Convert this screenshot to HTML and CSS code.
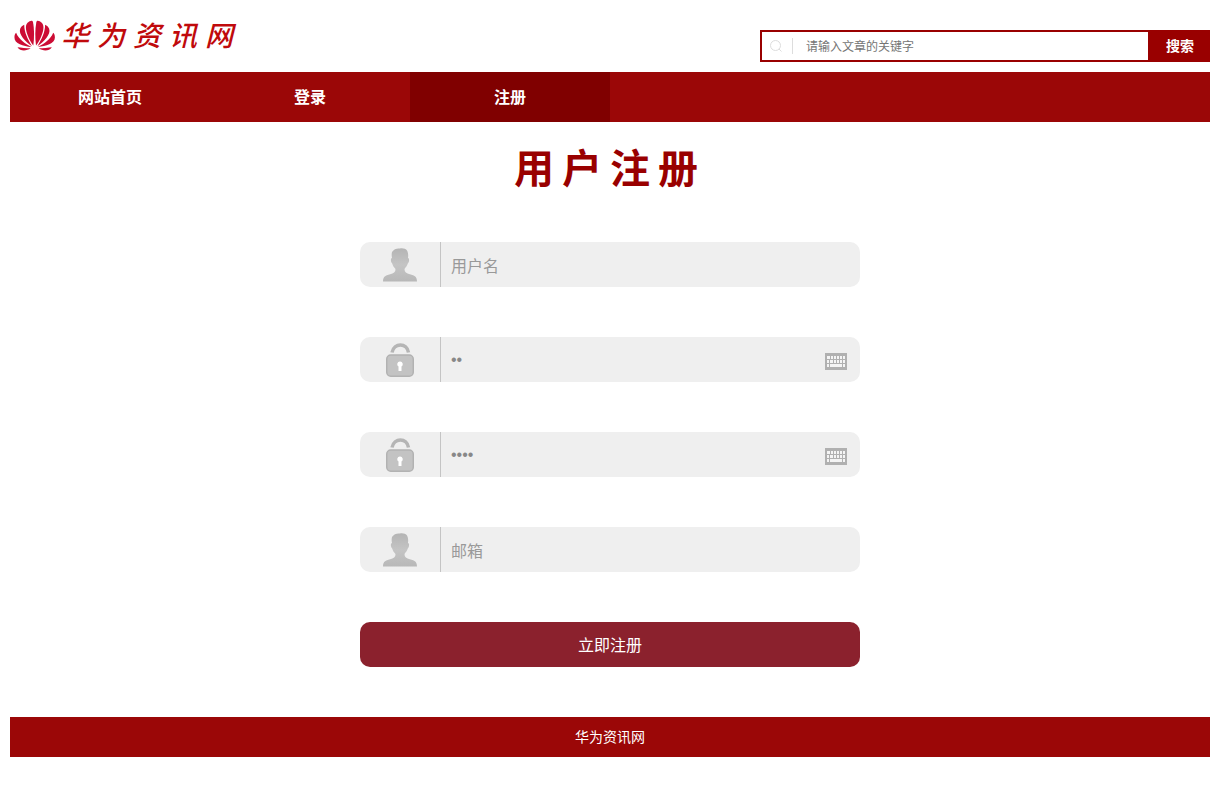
FILE: index.html
```
<!DOCTYPE html>
<html lang="zh-CN">
<head>
<meta charset="utf-8">
<title>用户注册 - 华为资讯网</title>
<link rel="stylesheet" href="styles.css">
</head>
<body>
<svg class="defs" aria-hidden="true">
  <defs>
    <linearGradient id="shade" x1="0" y1="0" x2="0" y2="1">
      <stop offset="0" stop-color="#b4b4b4"/>
      <stop offset="0.5" stop-color="#c4c4c4"/>
      <stop offset="1" stop-color="#b8b8b8"/>
    </linearGradient>
    <symbol id="user" viewBox="0 0 34 34">
      <path fill="url(#shade)" d="M9 4C11 1 14 0 17 .5C19 0 23 .5 24 2.500C25 4 25.500 7 25 10C26.500 10 26.500 14 24.800 15.500C24 18 22.500 19.500 21.500 21C21.500 24 23 25 26 26C31 27.500 34 28 34 33.500H0C0 28 3 27.500 8 26C11 25 12.500 24 12.500 21C11 19.500 10 18 9.200 15.500C7.500 14 7.500 10 9 10C8.600 8 8.500 6 9 4Z"/>
    </symbol>
    <symbol id="lock" viewBox="0 0 28 35">
      <path fill="none" stroke="#b5b5b5" stroke-width="3.500" d="M6 10.500C8 .5 21 .5 22.500 10.500"/>
      <rect x=".75" y="13" width="26.500" height="21.200" rx="4" fill="#c3c3c3" stroke="#b2b2b2" stroke-width="1.500"/>
      <path fill="#fff" d="M14 19.500a2.700 2.700 0 0 1 1.500 5V29h-3v-4.500A2.700 2.700 0 0 1 14 19.500Z"/>
    </symbol>
    <symbol id="keyboard" viewBox="0 0 22 17">
      <path fill="#b0b0b0" d="M0 0h22v17H0z"/>
      <path fill="#f4f4f4" d="M2 3h3v3H2zM6 3h2v3H6zM9 3h2v3H9zM12 3h2v3h-2zM15 3h2v3h-2zM18 3h2v3h-2zM2 7h2v3H2zM5 7h3v3H5zM9 7h2v3H9zM12 7h2v3h-2zM15 7h2v3h-2zM18 7h2v3h-2zM2 11h2v3H2zM5 11h12v3H5zM18 11h2v3h-2z"/>
    </symbol>
  </defs>
</svg>
<div class="page">
  <header class="header">
    <a class="logo" href="#">
      <svg class="logo-mark" viewBox="42 28 121 92" aria-hidden="true">
        <g id="petals" fill="#cc0c34">
          <path d="M99 104C84 84 69 48 82 36C88 31 96 27 98 34C102 55 102 80 99 104Z"/>
          <path d="M95 106C76 94 54 70 60 54C62 48 67 44 72 42C72 64 82 84 95 106Z"/>
          <path d="M93 108C70 106 42 98 43 79C43 73 45 69 48 66C56 86 74 98 93 108Z"/>
          <path d="M91 112C78 121 60 121 52 109C62 110 78 112 91 112Z"/>
        </g>
        <use href="#petals" transform="translate(206 0) scale(-1 1)"/>
      </svg>
      <span class="logo-text">华为资讯网</span>
    </a>
    <form class="search" role="search">
      <label class="search-label" for="keyword">
        <svg class="search-icon" viewBox="0 0 14 14" role="img" aria-label="搜索文章"><path fill="none" stroke="#ddd" d="M11.500 6.500A5 5 0 1 1 1.500 6.500A5 5 0 1 1 11.500 6.500M10 10L12.500 12.500"/></svg>
      </label>
      <input class="search-input" id="keyword" type="text" placeholder="请输入文章的关键字">
      <button class="search-button" type="submit">搜索</button>
    </form>
  </header>
  <nav class="nav">
    <a class="nav-link" href="#">网站首页</a>
    <a class="nav-link" href="#">登录</a>
    <a class="nav-link active" href="#" aria-current="page">注册</a>
  </nav>
  <main>
    <h1 class="title">用户注册</h1>
    <form class="register">
      <div class="field">
        <label class="field-label" for="username"><svg class="user-icon" role="img" aria-label="用户名"><use href="#user"/></svg></label>
        <input class="field-input" id="username" type="text" placeholder="用户名">
      </div>
      <div class="field">
        <label class="field-label" for="password"><svg class="lock-icon" role="img" aria-label="密码"><use href="#lock"/></svg></label>
        <input class="field-input password" id="password" type="password" value="12">
        <button class="key-button" type="button" aria-label="软键盘"><svg class="key-icon"><use href="#keyboard"/></svg></button>
      </div>
      <div class="field">
        <label class="field-label" for="confirm"><svg class="lock-icon" role="img" aria-label="确认密码"><use href="#lock"/></svg></label>
        <input class="field-input password" id="confirm" type="password" value="1234">
        <button class="key-button" type="button" aria-label="软键盘"><svg class="key-icon"><use href="#keyboard"/></svg></button>
      </div>
      <div class="field">
        <label class="field-label" for="email"><svg class="user-icon" role="img" aria-label="邮箱"><use href="#user"/></svg></label>
        <input class="field-input" id="email" type="text" placeholder="邮箱">
      </div>
      <button class="submit" type="submit">立即注册</button>
    </form>
  </main>
  <footer class="footer">华为资讯网</footer>
</div>
</body>
</html>
```
FILE: styles.css
```
* {
  box-sizing: border-box;
}

body {
  margin: 0;
  background: #fff;
  font-family: "Noto Sans CJK SC", sans-serif;
  font-size: 16px;
}

input,
button {
  margin: 0;
  border: 0;
  font-family: inherit;
}

svg {
  display: block;
}

.defs {
  position: absolute;
  width: 0;
  height: 0;
}

.page {
  padding: 0 10px;
}

.header {
  display: flex;
  justify-content: space-between;
  align-items: flex-end;
  padding: 10px 0;
}

.logo {
  display: flex;
  align-items: center;
  gap: 6px;
  height: 52px;
  padding: 0 0 2px 4px;
  color: #c00a0c;
  text-decoration: none;
}

.logo-mark {
  width: 41px;
  height: 31px;
}

.logo-text {
  padding-bottom: 2px;
  font-size: 28px;
  font-style: italic;
  font-weight: 500;
  letter-spacing: 8px;
  line-height: 40px;
}

.search {
  display: flex;
  width: 450px;
  height: 32px;
  border: 2px solid #900;
}

.search-label {
  display: flex;
  align-items: center;
  padding-left: 7px;
}

.search-icon {
  width: 14px;
  height: 14px;
}

.search-label::after {
  content: "";
  width: 1px;
  height: 16px;
  margin-left: 9px;
  background: #ddd;
}

.search-input {
  flex: 1;
  min-width: 0;
  padding: 0 13px 2px;
  font-size: 12px;
}

.search-input::placeholder {
  color: #757575;
}

.search-button {
  width: 60px;
  padding: 0 0 2px 4px;
  background: #900;
  color: #fff;
  font-size: 14px;
  font-weight: 700;
}

.nav {
  display: flex;
  background: #9b0707;
}

.nav-link {
  width: 200px;
  padding-bottom: 2px;
  color: #fff;
  font-weight: 700;
  line-height: 48px;
  text-align: center;
  text-decoration: none;
}

.nav-link.active {
  background: #800000;
}

.title {
  margin: 18px 0 50px;
  color: #900;
  font-size: 40px;
  letter-spacing: 8px;
  line-height: 52px;
  text-align: center;
}

.register {
  display: flex;
  flex-direction: column;
  gap: 50px;
  max-width: 500px;
  margin: 0 auto 50px;
}

.field {
  display: flex;
  align-items: stretch;
  height: 45px;
  overflow: hidden;
  border-radius: 10px;
  background: #efefef;
}

.field-label {
  display: flex;
  justify-content: center;
  align-items: center;
  width: 81px;
  border-right: 1px solid #c4c4c4;
}

.user-icon {
  width: 34px;
  height: 34px;
}

.lock-icon {
  width: 28px;
  height: 35px;
}

.field-input {
  flex: 1;
  min-width: 0;
  padding: 0 10px;
  background: transparent;
  color: #888;
  font-size: 16px;
}

.field-input::placeholder {
  color: #999;
}

.password {
  font-family: "Liberation Sans", sans-serif;
}

.key-button {
  padding: 4px 13px 0;
  background: transparent;
}

.key-icon {
  width: 22px;
  height: 17px;
}

.submit {
  height: 45px;
  padding: 0 0 2px;
  border-radius: 10px;
  background: #8b212d;
  color: #fff;
  font-size: 16px;
}

.footer {
  padding-bottom: 2px;
  background: #9b0707;
  color: #fff;
  font-size: 14px;
  line-height: 38px;
  text-align: center;
}
```
